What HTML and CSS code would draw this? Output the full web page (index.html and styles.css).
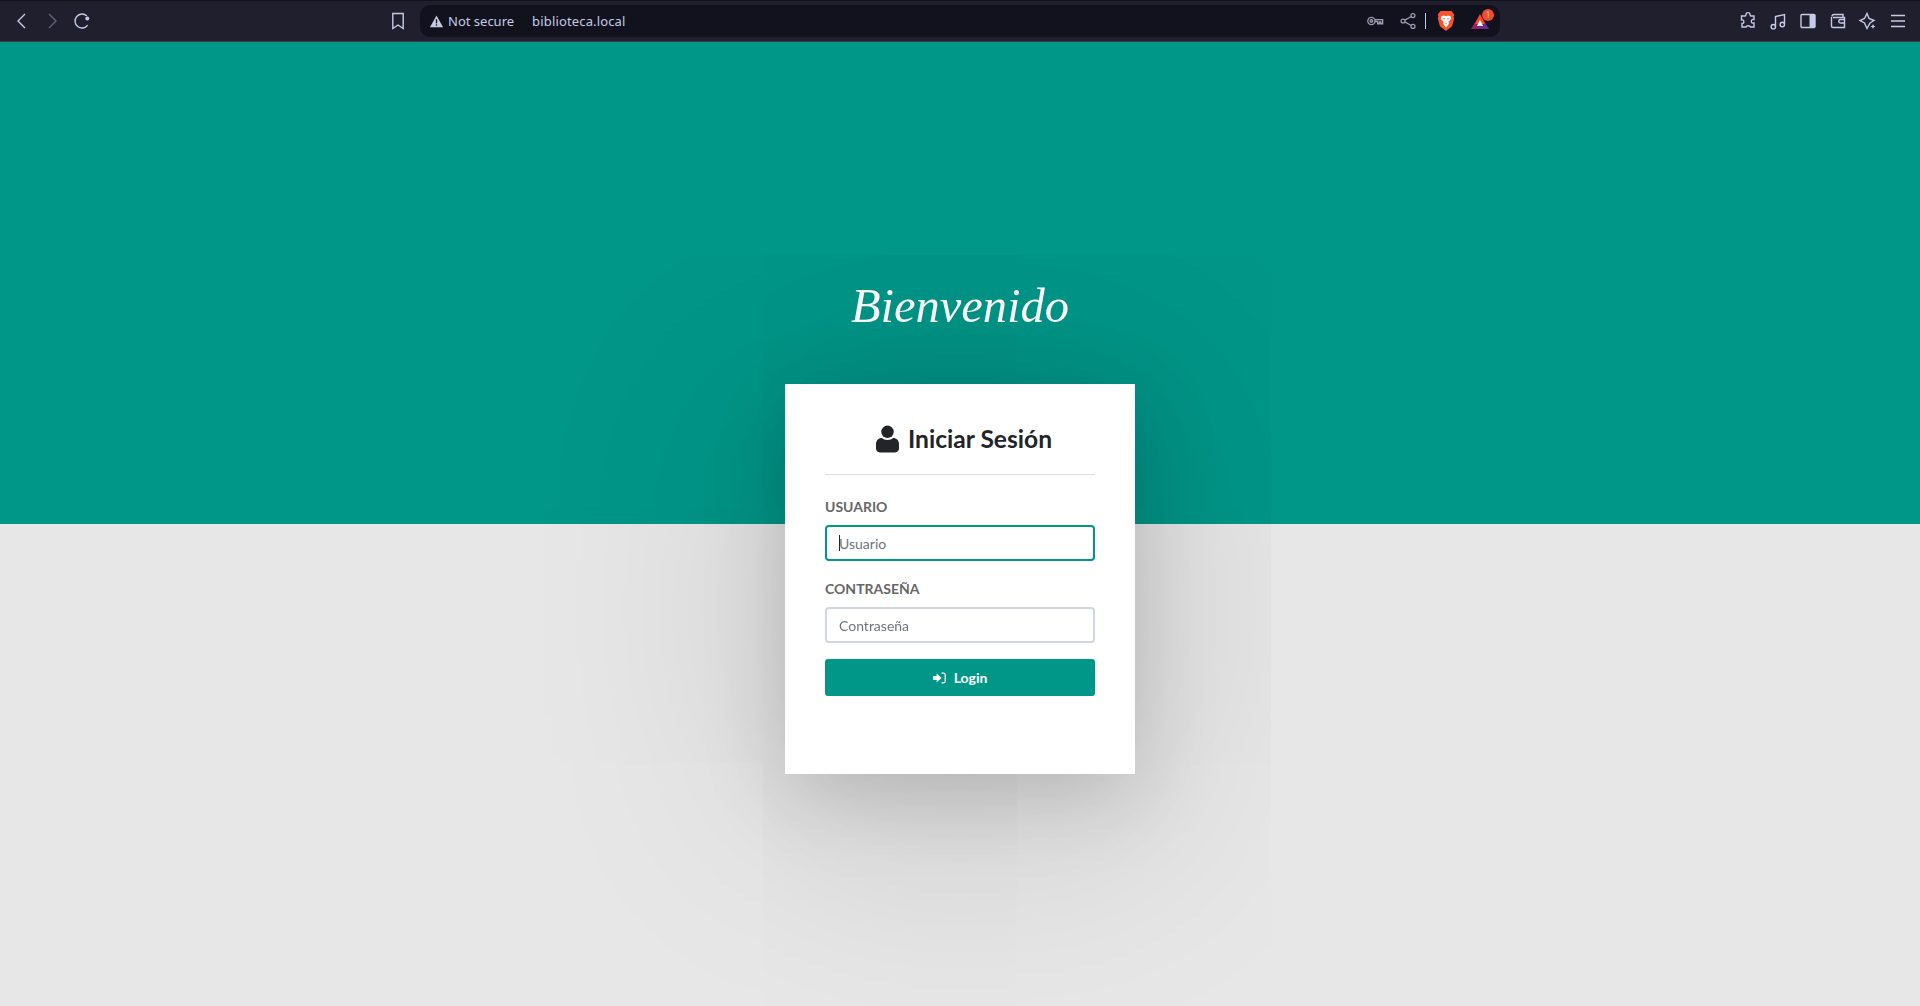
FILE: index.html
```html
<!DOCTYPE html>
<html lang="es">
<head>
<meta charset="utf-8">
<title>Biblioteca</title>
<link rel="stylesheet" href="styles.css">
</head>
<body>
<header class="toolbar">
  <div class="nav">
    <svg class="ic" viewBox="0 0 20 20"><path d="M13 3 L6 10 L13 17"/></svg>
    <svg class="ic dim" viewBox="0 0 20 20"><path d="M7 3 L14 10 L7 17"/></svg>
    <svg class="ic" viewBox="0 0 20 20"><path d="M15.700 14.200 A7 7 0 1 1 14.800 4.900"/><circle class="solid" cx="15.300" cy="7.400" r="2"/></svg>
  </div>
  <svg class="ic bookmark" viewBox="0 0 20 20"><path d="M4.800 2.500h10.400v15L10 14l-5.200 3.500z"/></svg>
  <div class="omnibox">
    <svg class="warn" viewBox="0 0 16 16"><path d="M8 1.500 L15 14 H1 Z"/><rect x="7.300" y="5.500" width="1.400" height="4.500" fill="#12121e"/><rect x="7.300" y="11" width="1.400" height="1.500" fill="#12121e"/></svg>
    <span class="secure">Not secure</span>
    <span class="url">biblioteca.local</span>
    <div class="omni-right">
      <svg class="ic-s key" viewBox="0 0 20 20"><circle cx="6" cy="10" r="4"/><circle cx="6" cy="10" r="1.400"/><path d="M10 8.500h8.500v4.500h-2v-2h-1.500v2h-2v-2.500H10"/></svg>
      <svg class="ic-s share" viewBox="0 0 20 20"><circle cx="15.500" cy="4" r="2.200"/><circle cx="15.500" cy="16" r="2.200"/><circle cx="4.500" cy="10" r="2.200"/><path d="M13.600 5 6.400 9M13.600 15 6.400 11"/></svg>
      <span class="sep"></span>
      <svg class="brave" viewBox="0 0 20 20"><path fill="#fb542b" d="M5 1h10l2.500 3-.7 2.300.7 1-2 7.400L10 19l-5.500-4.300-2-7.400.7-1-.7-2.300z"/><path fill="#fff" d="M5.500 6 8 5l2 .6 2-.6 2.500 1 .2 2-2.500 2.800.5 1.700L10 16l-2.700-3.500.5-1.700L5.300 8z"/><path fill="#fb542b" d="M7 7.500h2l-.5 1.300zM13 7.500h-2l.5 1.300zM9 12h2l-1 1z"/></svg>
      <div class="bat">
        <svg class="bat-logo" viewBox="0 0 20 20"><path fill="#ff4724" d="M10 3 L15.500 13 H4.500 Z"/><path fill="#9e1f63" d="M1 18 L4.500 12 L10 15.500 V18 Z"/><path fill="#662d91" d="M19 18 L15.500 12 L10 15.500 V18 Z"/><path fill="#fff" d="M10 9 L13.300 15 H6.700 Z"/></svg>
        <span class="badge">1</span>
      </div>
    </div>
  </div>
  <div class="tools">
    <svg class="ic-t" viewBox="0 0 20 20"><path d="M8 3.500c0-2.500 4-2.500 4 0 0 1 0 1.500 1 1.500h3v3.500c-1 0-1.500-.3-2 .2-1.500 1.200-.5 4 1.500 3.300l.5 0V16h-3.500c-.5-1.700-4-1.700-4.500 0H4v-3.500c2 .5 2.500-2.500 1-3.500-.4-.3-1 0-1.500 0V5H7c.7 0 1-.500 1-1.500z"/></svg>
    <svg class="ic-t" viewBox="0 0 20 20"><path d="M7.500 15.500V5.500L16.500 3.500V13"/><circle cx="5.300" cy="15.700" r="2.200"/><circle cx="14.300" cy="13.500" r="2.200"/></svg>
    <svg class="ic-t" viewBox="0 0 20 20"><rect x="3" y="3.500" width="14" height="13" rx="1"/><rect class="solid" x="11.500" y="3.500" width="5.500" height="13"/></svg>
    <svg class="ic-t" viewBox="0 0 20 20"><path d="M4 5.500A2 2 0 0 1 6 3.500h9v3M3.500 6v9a1.500 1.500 0 0 0 1.500 1.500h11.500v-10H5"/><path d="M17 8.500h-4.500a1.500 1.500 0 0 0 0 3.500H17"/></svg>
    <svg class="ic-t" viewBox="0 0 20 20"><path d="M9 2.500 11 7.500 16 9.500 12 12 9 17.500 6.500 12 2 9.500 6.500 7.500z"/><path class="solid" d="M15 13l.8 1.700 1.700.8-1.700.8-.8 1.700-.8-1.700-1.700-.8 1.700-.8z"/></svg>
    <svg class="ic-t" viewBox="0 0 20 20"><path d="M3 4.500h14M3 10h14M3 15.500h14"/></svg>
  </div>
</header>

<main class="page">
  <h1 class="welcome">Bienvenido</h1>
  <section class="card">
    <h2 class="card-title">
      <svg class="user" viewBox="0 0 24 28"><circle cx="12" cy="6.500" r="6.500"/><path d="M0 24v-4.500C0 15.500 2.500 13 6 13c1.500 1.300 3.700 2 6 2s4.500-.7 6-2c3.500 0 6 2.500 6 6.500V24c0 2.200-1.800 4-4 4H4c-2.200 0-4-1.800-4-4z"/></svg>
      Iniciar Sesión
    </h2>
    <hr class="rule">
    <form class="form">
      <label class="label" for="u">USUARIO</label>
      <div class="field">
        <input class="input" id="u" type="text" placeholder="Usuario" autofocus>
        <span class="caret"></span>
      </div>
      <label class="label" for="p">CONTRASEÑA</label>
      <div class="field">
        <input class="input" id="p" type="password" placeholder="Contraseña">
      </div>
      <button class="login" type="button">
        <svg class="signin" viewBox="0 0 16 14"><path d="M0 4.500h4.500V1.500L10.500 7l-6 5.500v-3H0z"/><path class="open" d="M10.500 1H13a2 2 0 0 1 2 2v8a2 2 0 0 1-2 2h-2.500"/></svg>
        Login
      </button>
    </form>
  </section>
</main>
</body>
</html>
```

FILE: styles.css
```css
* { box-sizing: border-box; }
html, body { margin: 0; height: 100%; }
body {
  height: 1006px;
  display: flex;
  flex-direction: column;
  overflow: hidden;
  background: #e7e7e7;
  font-family: Lato, "Liberation Sans", sans-serif;
}

/* Browser chrome */
.toolbar {
  height: 42px;
  flex: none;
  display: flex;
  align-items: center;
  background: #1f1f2e;
  border-top: 1px solid #12121c;
  border-bottom: 1px solid #3a3a48;
  font-family: "Noto Sans", sans-serif;
  color: #c5cbe6;
}
.toolbar svg { fill: none; stroke: #c5cbe6; stroke-width: 1.4; }
.toolbar svg .solid { fill: #c5cbe6; stroke: none; }
.nav { display: flex; gap: 10px; margin-left: 12px; width: 375.5px; }
.ic { width: 20px; height: 20px; }
.dim { opacity: .4; }
.bookmark { width: 20px; height: 20px; }
.omnibox {
  margin-left: 12.5px;
  width: 1080px;
  height: 32px;
  background: #12121e;
  border-radius: 10px;
  display: flex;
  align-items: center;
  padding-left: 9px;
  font-size: 13px;
}
.toolbar svg.warn { width: 15px; height: 15px; fill: #c5cbe6; stroke: none; }
.secure { margin-left: 4px; }
.url { margin-left: 18px; letter-spacing: .15px; }
.omni-right { margin-left: auto; display: flex; align-items: center; }
.ic-s { width: 18px; height: 18px; }
.toolbar svg.ic-s { stroke: #9a9db0; }
.toolbar svg.key { width: 18px; height: 18px; stroke-width: 1.5; }
.share { margin-left: 15px; }
.sep { width: 1px; height: 16px; background: #c5cbe6; margin: 0 9px 0 8px; }
.toolbar svg.brave { width: 22px; height: 22px; stroke: none; }
.bat { position: relative; width: 20px; height: 20px; margin: 0 10px 0 13px; }
.toolbar svg.bat-logo { width: 20px; height: 20px; stroke: none; }
.badge {
  position: absolute;
  top: -2px;
  right: -4px;
  width: 12px;
  height: 12px;
  border-radius: 50%;
  background: #f04a2f;
  color: #ffc9bc;
  font-size: 8px;
  line-height: 12px;
  text-align: center;
}
.tools { margin-left: auto; margin-right: 12.5px; display: flex; gap: 10px; }
.ic-t { width: 20px; height: 20px; }

/* Page */
.page {
  flex: 1;
  display: flex;
  flex-direction: column;
  align-items: center;
  background: linear-gradient(#009688 0 482px, #e7e7e7 482px);
  padding-top: 236px;
}
.welcome {
  margin: 0 0 20px;
  height: 86px;
  line-height: 56px;
  font-family: "Liberation Serif", serif;
  font-style: italic;
  font-weight: 400;
  font-size: 48.5px;
  color: #fff;
}
.card {
  width: 350px;
  height: 390px;
  background: #fff;
  padding: 40px;
  box-shadow: 0 20px 80px rgba(0,0,0,.16), 0 30px 280px rgba(0,0,0,.2);
}
.card-title {
  margin: 0;
  height: 29px;
  padding-left: 8px;
  display: flex;
  align-items: center;
  justify-content: center;
  gap: 9px;
  font-size: 24.6px;
  font-weight: 700;
  color: #212529;
}
.user { width: 23px; height: 28px; fill: #212529; }
.rule { margin: 21px 0; border: 0; border-top: 1px solid #ddd; }
.form { display: flex; flex-direction: column; }
.label { font-size: 14px; font-weight: 700; color: #666; line-height: 21px; margin-bottom: 8px; }
.field { position: relative; height: 36px; margin-bottom: 17px; }
.input {
  width: 100%;
  height: 36px;
  padding: 0 12px;
  border: 2px solid #d1d5de;
  border-radius: 4px;
  font-family: Lato, sans-serif;
  font-size: 14px;
  color: #495057;
  outline: none;
}
.input::placeholder { color: #6c757d; opacity: 1; }
.input:focus { border-color: #009688; caret-color: #212529; }
.caret {
  position: absolute;
  left: 14px;
  top: 10px;
  width: 1px;
  height: 16px;
  background: #212529;
}
.login {
  height: 37px;
  margin-top: -1px;
  display: flex;
  align-items: center;
  justify-content: center;
  gap: 8px;
  background: #009688;
  border: 0;
  border-radius: 3px;
  color: #fff;
  font-family: Lato, sans-serif;
  font-size: 14px;
  font-weight: 700;
}
.signin { width: 13px; height: 12px; fill: #fff; }
.signin .open { fill: none; stroke: #fff; stroke-width: 1.500; }
```
